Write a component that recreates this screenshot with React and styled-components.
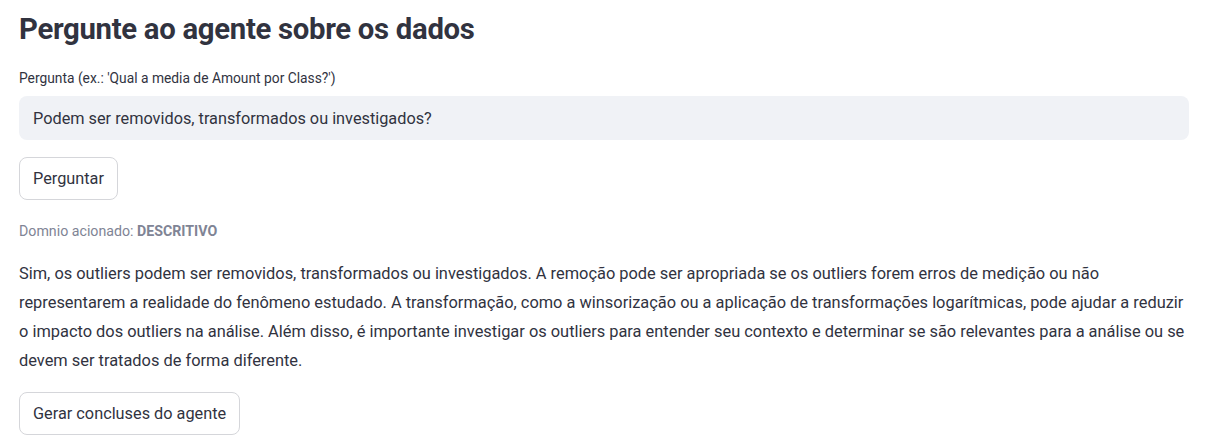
import React, { useState } from 'react';
import styled, { createGlobalStyle } from 'styled-components';

const GlobalStyle = createGlobalStyle`
  body {
    margin: 0;
    background: #ffffff;
    font-family: 'Roboto', 'Noto Sans', sans-serif;
    color: #31333f;
  }
`;

const Page = styled.div`
  padding: 7px 22px 0 19px;
  display: flex;
  flex-direction: column;
`;

const Title = styled.h2`
  margin: 0;
  font-size: 29.3px;
  font-weight: 700;
  line-height: 44px;
  letter-spacing: -0.3px;
  color: #31333f;
`;

const Label = styled.label`
  margin-top: 17px;
  font-size: 13.8px;
  line-height: 20px;
  color: #31333f;
`;

const Input = styled.input`
  margin-top: 8px;
  height: 44px;
  box-sizing: border-box;
  border: none;
  border-radius: 8px;
  background: #f0f2f6;
  padding: 0 14px;
  font-family: inherit;
  font-size: 16.3px;
  color: #31333f;
  outline: none;
`;

const Button = styled.button`
  align-self: flex-start;
  margin-top: ${p => p.$top || 0}px;
  height: 43px;
  box-sizing: border-box;
  padding: 0 13px;
  background: #ffffff;
  border: 1px solid #d5d6da;
  border-radius: 8px;
  font-family: inherit;
  font-size: 16.3px;
  color: #31333f;
  cursor: pointer;
`;

const Caption = styled.div`
  margin-top: 20px;
  font-size: 14.2px;
  line-height: 22px;
  color: #808495;

  strong {
    font-weight: 700;
  }
`;

const Answer = styled.p`
  margin: 17px 0 0;
  font-size: 16.4px;
  line-height: 29px;
  color: #31333f;
`;

const App = () => {
  const [question, setQuestion] = useState('Podem ser removidos, transformados ou investigados?');

  return (
    <>
      <GlobalStyle />
      <Page>
        <Title>Pergunte ao agente sobre os dados</Title>
        <Label htmlFor="pergunta">Pergunta (ex.: 'Qual a media de Amount por Class?')</Label>
        <Input id="pergunta" value={question} onChange={e => setQuestion(e.target.value)} />
        <Button $top={17}>Perguntar</Button>
        <Caption>
          Domnio acionado: <strong>DESCRITIVO</strong>
        </Caption>
        <Answer>
          Sim, os outliers podem ser removidos, transformados ou investigados. A remoção pode ser apropriada se os
          outliers forem erros de medição ou não representarem a realidade do fenômeno estudado. A transformação, como
          a winsorização ou a aplicação de transformações logarítmicas, pode ajudar a reduzir o impacto dos outliers na
          análise. Além disso, é importante investigar os outliers para entender seu contexto e determinar se são
          relevantes para a análise ou se devem ser tratados de forma diferente.
        </Answer>
        <Button $top={17}>Gerar concluses do agente</Button>
      </Page>
    </>
  );
};

export default App;
